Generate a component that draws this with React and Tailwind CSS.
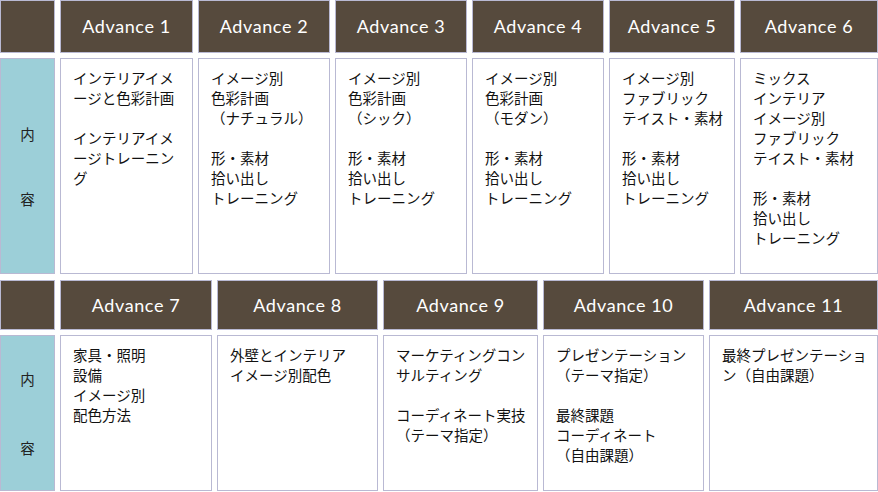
import React from "react";

const jp = { fontFamily: '"Noto Sans CJK JP", "Noto Sans", sans-serif' };
const hd = { fontFamily: 'Lato, "Open Sans", sans-serif' };

const row1 = [
  { t: "Advance 1", w: "w-[133px]", lines: ["インテリアイメ", "ージと色彩計画", "", "インテリアイメ", "ージトレーニン", "グ"] },
  { t: "Advance 2", w: "w-[132px]", lines: ["イメージ別", "色彩計画", "（ナチュラル）", "", "形・素材", "拾い出し", "トレーニング"] },
  { t: "Advance 3", w: "w-[132px]", lines: ["イメージ別", "色彩計画", "（シック）", "", "形・素材", "拾い出し", "トレーニング"] },
  { t: "Advance 4", w: "w-[132px]", lines: ["イメージ別", "色彩計画", "（モダン）", "", "形・素材", "拾い出し", "トレーニング"] },
  { t: "Advance 5", w: "w-[126px]", lines: ["イメージ別", "ファブリック", "テイスト・素材", "", "形・素材", "拾い出し", "トレーニング"] },
  { t: "Advance 6", w: "w-[138px]", lines: ["ミックス", "インテリア", "イメージ別", "ファブリック", "テイスト・素材", "", "形・素材", "拾い出し", "トレーニング"] },
];

const row2 = [
  { t: "Advance 7", w: "w-[152px]", lines: ["家具・照明", "設備", "イメージ別", "配色方法"] },
  { t: "Advance 8", w: "w-[161px]", lines: ["外壁とインテリア", "イメージ別配色"] },
  { t: "Advance 9", w: "w-[155px]", lines: ["マーケティングコン", "サルティング", "", "コーディネート実技", "（テーマ指定）"] },
  { t: "Advance 10", w: "w-[161px]", lines: ["プレゼンテーション", "（テーマ指定）", "", "最終課題", "コーディネート", "（自由課題）"] },
  { t: "Advance 11", w: "w-[169px]", lines: ["最終プレゼンテーショ", "ン（自由課題）"] },
];

function Block({ cols, headH, bodyH, labelGap }) {
  return (
    <div className="flex flex-col gap-[5px]">
      <div className={`flex gap-[5px] ${headH}`}>
        <div className="w-[55px] shrink-0 bg-[#564a3d] border border-[#b9b9d3]" />
        {cols.map((c) => (
          <div
            key={c.t}
            className={`${c.w} shrink-0 bg-[#564a3d] border border-[#b9b9d3] flex items-center justify-center text-white text-[18px] tracking-[0.6px]`}
            style={hd}
          >
            {c.t}
          </div>
        ))}
      </div>
      <div className={`flex gap-[5px] ${bodyH}`}>
        <div
          className={`w-[55px] shrink-0 bg-[#9ccfd8] border border-[#b9b9d3] flex flex-col items-center justify-center ${labelGap} text-[14.5px] text-[#222]`}
          style={jp}
        >
          <span>内</span>
          <span>容</span>
        </div>
        {cols.map((c) => (
          <div
            key={c.t}
            className={`${c.w} shrink-0 bg-white border border-[#b9b9d3] pl-[12px] pt-[9px] text-[14.5px] leading-[20px] text-[#111] whitespace-nowrap`}
            style={jp}
          >
            {c.lines.map((l, i) => (
              <div key={i} className="h-[20px]">
                {l}
              </div>
            ))}
          </div>
        ))}
      </div>
    </div>
  );
}

export default function App() {
  return (
    <div className="w-[878px] h-[492px] bg-white flex flex-col gap-[6px] overflow-hidden">
      <Block cols={row1} headH="h-[53px]" bodyH="h-[216px]" labelGap="gap-[43px]" />
      <Block cols={row2} headH="h-[50px]" bodyH="h-[156px]" labelGap="gap-[47px]" />
    </div>
  );
}
